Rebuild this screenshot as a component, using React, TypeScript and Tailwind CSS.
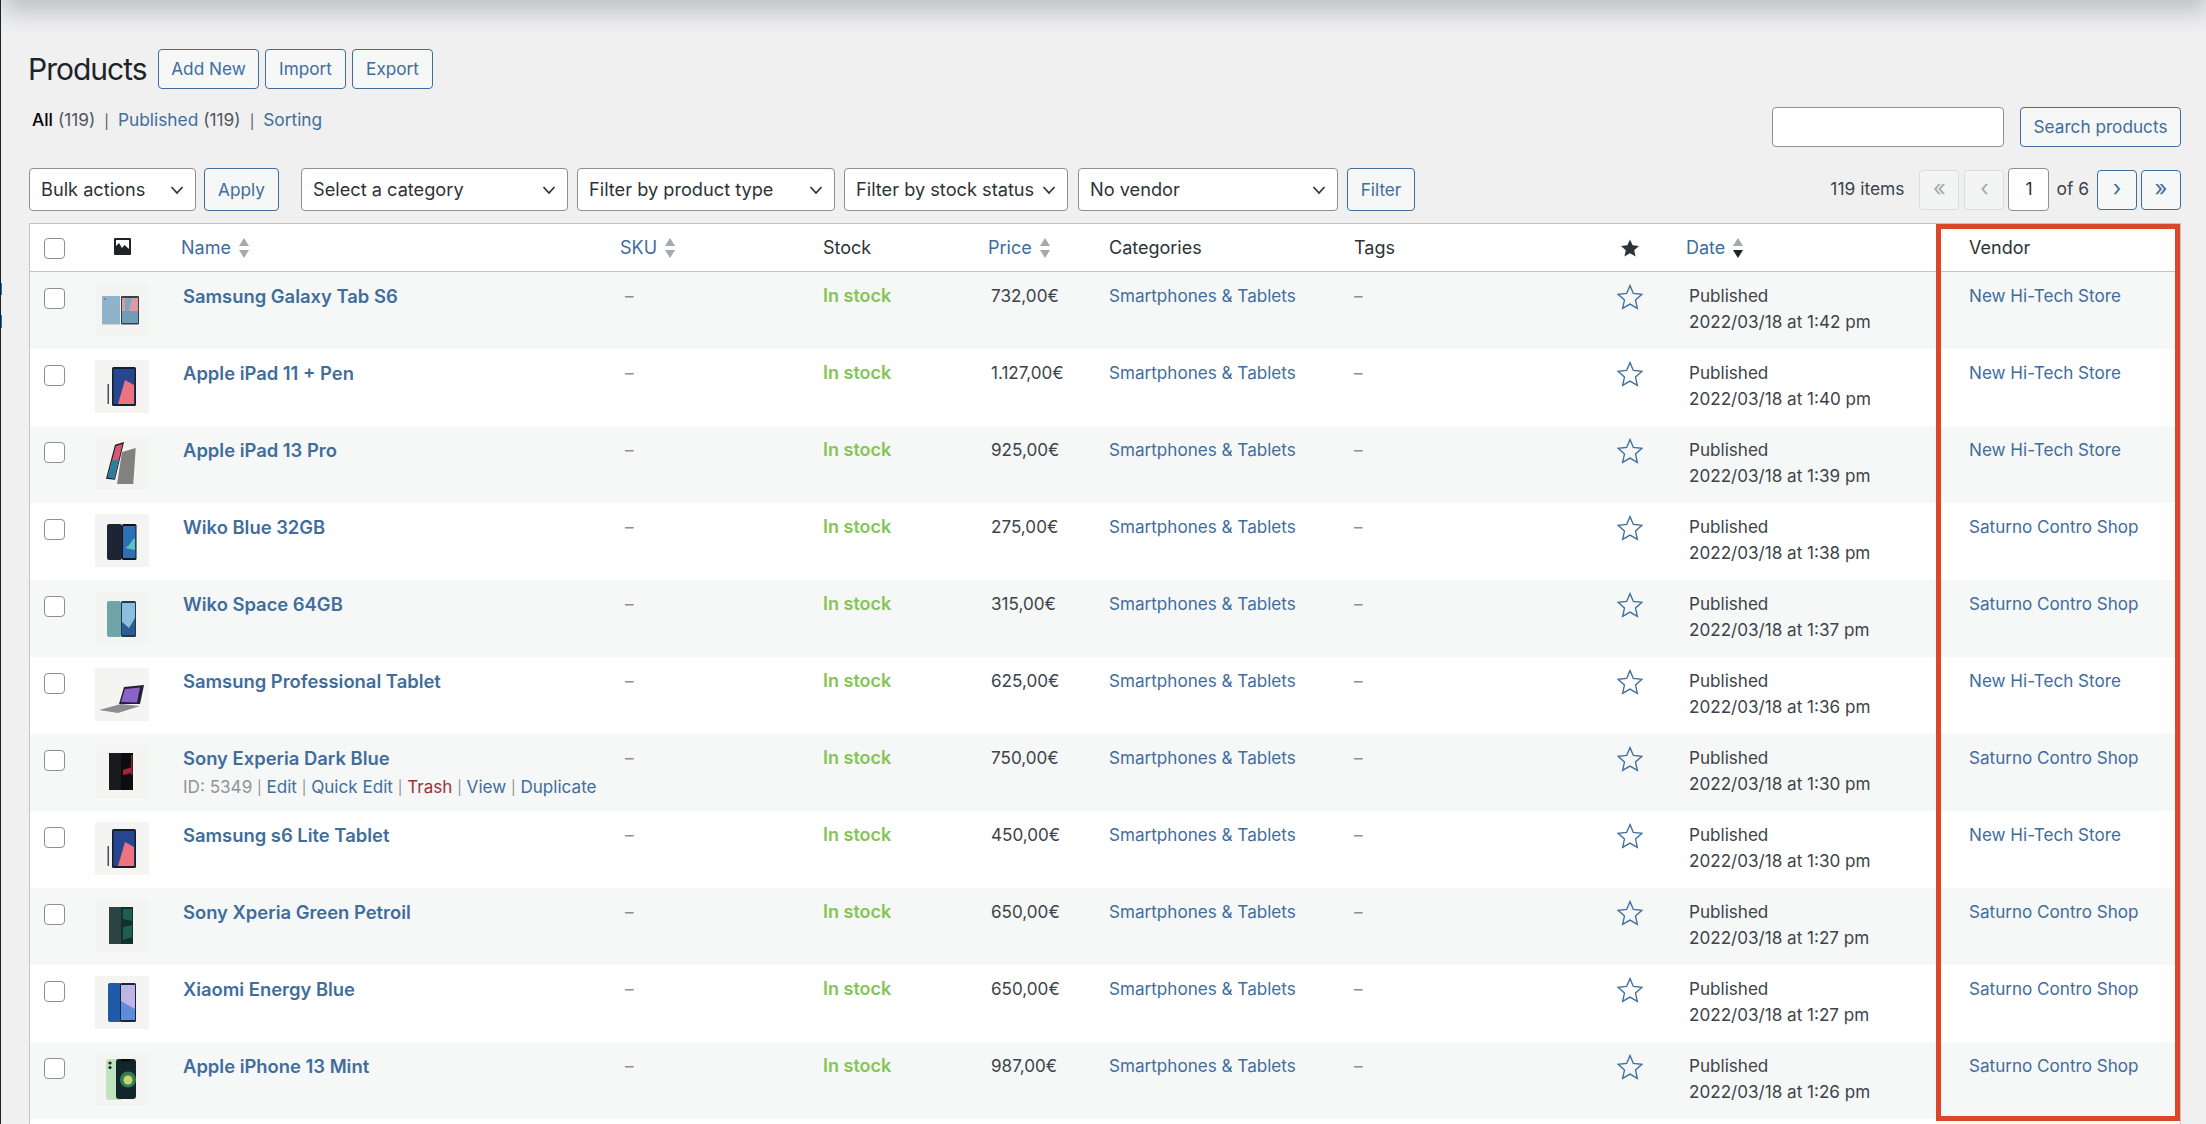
import React from "react";

const link = "text-[#3f6d9c]";

type Product = {
  name: string;
  price: string;
  vendor: string;
  time: string;
  thumb: number;
  actions?: boolean;
};

const products: Product[] = [
  { name: "Samsung Galaxy Tab S6", price: "732,00€", vendor: "New Hi-Tech Store", time: "1:42", thumb: 0 },
  { name: "Apple iPad 11 + Pen", price: "1.127,00€", vendor: "New Hi-Tech Store", time: "1:40", thumb: 1 },
  { name: "Apple iPad 13 Pro", price: "925,00€", vendor: "New Hi-Tech Store", time: "1:39", thumb: 2 },
  { name: "Wiko Blue 32GB", price: "275,00€", vendor: "Saturno Contro Shop", time: "1:38", thumb: 3 },
  { name: "Wiko Space 64GB", price: "315,00€", vendor: "Saturno Contro Shop", time: "1:37", thumb: 4 },
  { name: "Samsung Professional Tablet", price: "625,00€", vendor: "New Hi-Tech Store", time: "1:36", thumb: 5 },
  { name: "Sony Experia Dark Blue", price: "750,00€", vendor: "Saturno Contro Shop", time: "1:30", thumb: 6, actions: true },
  { name: "Samsung s6 Lite Tablet", price: "450,00€", vendor: "New Hi-Tech Store", time: "1:30", thumb: 1 },
  { name: "Sony Xperia Green Petroil", price: "650,00€", vendor: "Saturno Contro Shop", time: "1:27", thumb: 7 },
  { name: "Xiaomi Energy Blue", price: "650,00€", vendor: "Saturno Contro Shop", time: "1:27", thumb: 8 },
  { name: "Apple iPhone 13 Mint", price: "987,00€", vendor: "Saturno Contro Shop", time: "1:26", thumb: 9 },
];

const Chevron = () => (
  <svg width="14" height="10" viewBox="0 0 14 10" fill="none" stroke="#2c3338" strokeWidth="1.7">
    <path d="M1.5 2l5.5 6 5.5-6" />
  </svg>
);

const SortArrows = ({ active }: { active?: boolean }) => (
  <svg width="12" height="20" viewBox="0 0 12 20" className="ml-[7px] shrink-0">
    <path d="M6 0l5 8H1z" fill="#a7aaad" />
    <path d="M6 20l5-8H1z" fill={active ? "#1d2327" : "#a7aaad"} />
  </svg>
);

const StarOutline = () => (
  <svg width="26" height="26" viewBox="0 0 24 24" fill="none" stroke="#3f6d9c" strokeWidth="1.25" strokeLinejoin="miter" className="-ml-[1px]">
    <polygon points="12,1.5 15.1,8.7 23,9.5 17.1,14.8 18.8,22.5 12,18.5 5.2,22.5 6.9,14.8 1,9.5 8.9,8.7" />
  </svg>
);

const Checkbox = () => (
  <span className="block w-[21px] h-[21px] rounded-[4px] border border-[#8c8f94] bg-white" />
);

const OutlineButton = ({ label, className }: { label: string; className?: string }) => (
  <button className={`h-[40px] rounded-[4px] border border-[#3f6d9c] bg-[#f6f7f7] text-[17.2px] ${link} ${className ?? ""}`}>
    {label}
  </button>
);

const Select = ({ label, width }: { label: string; width: string }) => (
  <div className={`h-[43px] ${width} flex items-center justify-between pl-[11px] pr-[11px] rounded-[4px] border border-[#8c8f94] bg-white text-[18.2px] text-[#2c3338]`}>
    <span className="whitespace-nowrap">{label}</span>
    <Chevron />
  </div>
);

const PageButton = ({ label, disabled }: { label: string; disabled?: boolean }) => (
  <span
    className={`h-[40px] w-[40px] flex items-center justify-center rounded-[4px] border text-[22px] leading-none pb-[3px] ${
      disabled ? "border-[#dcdcde] bg-[#f3f4f4] text-[#a7aaad]" : `border-[#3f6d9c] bg-[#f6f7f7] ${link}`
    }`}
  >
    {label}
  </span>
);

const Thumb = ({ kind }: { kind: number }) => (
  <svg width="54" height="53" viewBox="0 0 54 53" className="block bg-[#f4f5f3]">
    {kind === 0 && (
      <>
        <rect x="7" y="13" width="18" height="28.5" rx="1" fill="#8fb4c9" />
        <circle cx="10" cy="16" r="1" fill="#5f7f92" />
        <rect x="26" y="13" width="18" height="28.5" rx="1" fill="#3a3f45" />
        <path d="M27 15h16v13H27z" fill="#dd9aa0" />
        <path d="M27 28h16v12H27z" fill="#6f9cb8" />
        <path d="M30 15h7l-3 13h-4z" fill="#7fa8bf" />
      </>
    )}
    {kind === 1 && (
      <>
        <rect x="12.5" y="24" width="1.5" height="20" fill="#4b4f55" />
        <rect x="17" y="7" width="24" height="39" rx="1.5" fill="#15202c" />
        <rect x="18.5" y="9" width="21" height="35" fill="#27468f" />
        <path d="M23 44l7-24 9 5v19z" fill="#ee7380" />
      </>
    )}
    {kind === 2 && (
      <>
        <path d="M27 15l13.7-4-2.4 36H22z" fill="#80827f" />
        <path d="M11 41.7l9-34 9-2.7-9 37.7z" fill="#151a22" />
        <path d="M12.5 40.5l8.3-31.5 6.7-2-8 34.5z" fill="#d55a70" />
        <path d="M12.5 40.5l4.5-17 7-1-5 19z" fill="#2a7f9e" />
      </>
    )}
    {kind === 3 && (
      <>
        <rect x="12" y="10" width="15" height="36" rx="2" fill="#1d2433" />
        <rect x="27" y="10" width="14.5" height="36" rx="1.5" fill="#10151c" />
        <rect x="28" y="12" width="12.5" height="32" fill="#2f6fb7" />
        <path d="M30 34c6-3 6-8 10-10v12z" fill="#58c4bd" />
      </>
    )}
    {kind === 4 && (
      <>
        <rect x="12" y="10" width="14" height="36" rx="2" fill="#6fa5a6" />
        <rect x="26" y="10" width="15" height="36" rx="1.5" fill="#1f3a55" />
        <rect x="27" y="12" width="13" height="32" fill="#8cbfdc" />
        <path d="M27 44V31l7 6 6-10v17z" fill="#2c5c94" />
      </>
    )}
    {kind === 5 && (
      <>
        <path d="M4 42l22-6 19 2-22 7z" fill="#8b8d90" />
        <path d="M24 36l5-17 20-2-4 19z" fill="#1f2330" />
        <path d="M26 34l4-13 15-1.5-3 15z" fill="#8a62c9" />
      </>
    )}
    {kind === 6 && (
      <>
        <rect x="14" y="8" width="12" height="37" fill="#1a1a1c" />
        <rect x="26" y="8" width="12" height="37" fill="#0d0d10" />
        <path d="M28 25l9-3v6l-9 2z" fill="#a3243b" />
        <rect x="36" y="10" width="1.5" height="20" fill="#7a2a3a" />
      </>
    )}
    {kind === 7 && (
      <>
        <rect x="14" y="8" width="12" height="37" fill="#2b4441" />
        <rect x="26" y="8" width="12" height="37" fill="#10312c" />
        <path d="M28 10h9v12l-9-2zM28 28l9-2v12l-9 3z" fill="#1f5e50" />
      </>
    )}
    {kind === 8 && (
      <>
        <rect x="13" y="7" width="13" height="39" rx="2" fill="#1f5aa8" />
        <rect x="25" y="7" width="16" height="39" rx="1.5" fill="#16273c" />
        <rect x="26" y="9" width="14" height="35" fill="#c0b4e6" />
        <path d="M26 44V25l14 8v11z" fill="#5f8cd8" />
      </>
    )}
    {kind === 9 && (
      <>
        <rect x="11" y="6" width="17" height="41" rx="3" fill="#bfe3bf" />
        <circle cx="15" cy="10" r="1.6" fill="#222" />
        <circle cx="15" cy="14.5" r="1.6" fill="#222" />
        <rect x="21" y="6" width="20" height="40" rx="3" fill="#12252a" />
        <circle cx="33" cy="26.5" r="8" fill="#3c7a55" />
        <circle cx="33" cy="27" r="4.5" fill="#c5d86d" />
        <rect x="26" y="6" width="9" height="2.5" rx="1" fill="#0a0a0a" />
      </>
    )}
  </svg>
);

const ImageIcon = () => (
  <svg width="17" height="17" viewBox="0 0 17 17" className="block -mt-[2px]">
    <rect width="17" height="17" rx="1" fill="#1d2327" />
    <rect x="2" y="2" width="13" height="13" fill="#fff" />
    <path d="M2 15V8l3-3 3 5 2.5-3 4.5 4v4z" fill="#1d2327" />
  </svg>
);

const Sep = () => <span className="mx-[0.85px] text-[14px] text-[#8c8f94]"> | </span>;

export default function App() {
  return (
    <div className="relative h-[1124px] w-[2206px] overflow-hidden border-l border-[#1d2327] bg-[#f0f0f1] pl-[28px] pr-[25px] pt-[49px] font-['Inter',sans-serif] text-[18px] text-[#3c434a]">
      {/* admin bar shadow bleeding in from above the crop */}
      <div className="absolute -top-[14px] left-[14px] right-[10px] h-[14px] bg-[#a6a9ad] shadow-[0_0_24px_12px_#bcbfc3]" />
      <div className="absolute left-0 top-[283px] h-[12px] w-px bg-[#2271b1]" />
      <div className="absolute left-0 top-[315px] h-[13px] w-px bg-[#2271b1]" />

      {/* title */}
      <div className="flex items-center h-[40px]">
        <h1 className="-ml-[1px] w-[130px] text-[30px] font-normal tracking-[-1px] text-[#1d2327]">Products</h1>
        <OutlineButton label="Add New" className="w-[101px]" />
        <OutlineButton label="Import" className="w-[81px] ml-[6px]" />
        <OutlineButton label="Export" className="w-[81px] ml-[6px]" />
      </div>

      {/* status links + search */}
      <div className="flex justify-between h-[67px] pl-[3px] pt-[18px]">
        <div className="flex items-start h-[26px] leading-[26px] text-[17.3px]">
          <span className="font-medium text-black">All</span>
          <span className="ml-[5px] text-[#50575e]">(119)</span>
          <span className="mx-[9px] text-[14px] pt-[2px] text-[#50575e]">|</span>
          <span className={link}>Published</span>
          <span className="ml-[5px] text-[#50575e]">(119)</span>
          <span className="mx-[9px] text-[14px] pt-[2px] text-[#50575e]">|</span>
          <span className={link}>Sorting</span>
        </div>
        <div className="flex h-[40px]">
          <div className="w-[232px] h-[40px] rounded-[4px] border border-[#8c8f94] bg-white" />
          <OutlineButton label="Search products" className="w-[161px] ml-[16px]" />
        </div>
      </div>

      {/* filters + pagination */}
      <div className="flex items-center justify-between h-[43px] mt-[12px]">
        <div className="flex items-center">
          <Select label="Bulk actions" width="w-[167px]" />
          <OutlineButton label="Apply" className="w-[75px] h-[43px] ml-[8px]" />
          <Select label="Select a category" width="w-[267px] ml-[22px]" />
          <Select label="Filter by product type" width="w-[258px] ml-[9px]" />
          <Select label="Filter by stock status" width="w-[224px] ml-[9px]" />
          <Select label="No vendor" width="w-[260px] ml-[10px]" />
          <OutlineButton label="Filter" className="w-[68px] h-[43px] ml-[9px]" />
        </div>
        <div className="flex items-center text-[17.4px]">
          <span className="mr-[15px]">119 items</span>
          <PageButton label="«" disabled />
          <span className="w-[5px]" />
          <PageButton label="‹" disabled />
          <span className="w-[4px]" />
          <span className="h-[43px] w-[41px] flex items-center justify-center rounded-[4px] border border-[#8c8f94] bg-white text-[#2c3338]">1</span>
          <span className="ml-[7px] mr-[8px]">of 6</span>
          <PageButton label="›" />
          <span className="w-[4px]" />
          <PageButton label="»" />
        </div>
      </div>

      {/* product table */}
      <div className="relative mt-[12px] w-[2152px] border border-[#c3c4c7] bg-white pb-[20px]">
        <table className="w-full table-fixed border-separate border-spacing-0">
          <colgroup>
            <col className="w-[65px]" />
            <col className="w-[86px]" />
            <col className="w-[439px]" />
            <col className="w-[203px]" />
            <col className="w-[165px]" />
            <col className="w-[121px]" />
            <col className="w-[245px]" />
            <col className="w-[264px]" />
            <col className="w-[68px]" />
            <col className="w-[283px]" />
            <col />
          </colgroup>
          <thead>
            <tr className="h-[48px] text-left align-middle text-[18px] font-normal text-[#2c3338]">
              <th className="border-b border-[#c3c4c7] pl-[14px] pt-[2px] font-normal"><Checkbox /></th>
              <th className="border-b border-[#c3c4c7] pl-[19px] font-normal"><ImageIcon /></th>
              <th className={`border-b border-[#c3c4c7] font-normal ${link}`}>
                <span className="flex items-center">Name<SortArrows /></span>
              </th>
              <th className={`border-b border-[#c3c4c7] font-normal ${link}`}>
                <span className="flex items-center">SKU<SortArrows /></span>
              </th>
              <th className="border-b border-[#c3c4c7] font-normal">Stock</th>
              <th className={`border-b border-[#c3c4c7] font-normal ${link}`}>
                <span className="flex items-center">Price<SortArrows /></span>
              </th>
              <th className="border-b border-[#c3c4c7] font-normal">Categories</th>
              <th className="border-b border-[#c3c4c7] font-normal">Tags</th>
              <th className="border-b border-[#c3c4c7] pl-[3px] font-normal">
                <svg width="18" height="18" viewBox="0 0 24 24" fill="#2c3338">
                  <polygon points="12,0.5 15.5,8.3 24,9.2 17.6,14.9 19.4,23.3 12,19 4.6,23.3 6.4,14.9 0,9.2 8.5,8.3" />
                </svg>
              </th>
              <th className={`border-b border-[#c3c4c7] font-normal ${link}`}>
                <span className="flex items-center">Date<SortArrows active /></span>
              </th>
              <th className="border-b border-[#c3c4c7] font-normal">Vendor</th>
            </tr>
          </thead>
          <tbody className="text-[17.1px] leading-[26px]">
            {products.map((p, i) => (
              <tr key={p.name} className={`h-[77px] align-top ${i % 2 === 0 ? "bg-[#f6f7f7]" : "bg-white"}`}>
                <td className="pl-[14px] pt-[16px]"><Checkbox /></td>
                <td className="pt-[11px]"><Thumb kind={p.thumb} /></td>
                <td className="pl-[2px] pt-[11px]">
                  <div className={`font-semibold text-[18.4px] ${link}`}>{p.name}</div>
                  {p.actions && (
                    <div className="mt-[3px] text-[17.1px] whitespace-nowrap text-[#8f9397]">
                      ID: 5349<Sep /><span className={link}>Edit</span><Sep /><span className={link}>Quick Edit</span><Sep /><span className="text-[#9b3333]">Trash</span><Sep /><span className={link}>View</span><Sep /><span className={link}>Duplicate</span>
                    </div>
                  )}
                </td>
                <td className="pl-[5px] pt-[11px] text-[#8c8f94]">–</td>
                <td className="pt-[11px] font-semibold text-[18px] text-[#84c556]">In stock</td>
                <td className="pl-[3px] pt-[11px]">{p.price}</td>
                <td className={`pt-[11px] ${link}`}>Smartphones &amp; Tablets</td>
                <td className="pt-[11px] text-[#8c8f94]">–</td>
                <td className="pt-[12px]"><StarOutline /></td>
                <td className="pl-[3px] pt-[11px]">
                  <div>Published</div>
                  <div>2022/03/18 at {p.time} pm</div>
                </td>
                <td className={`pt-[11px] ${link}`}>{p.vendor}</td>
              </tr>
            ))}
          </tbody>
        </table>

        {/* red highlight drawn on top of the vendor column */}
        <div className="absolute right-0 top-0 h-[897px] w-[244px] border-[5px] border-[#d9472d]" />
      </div>
    </div>
  );
}
